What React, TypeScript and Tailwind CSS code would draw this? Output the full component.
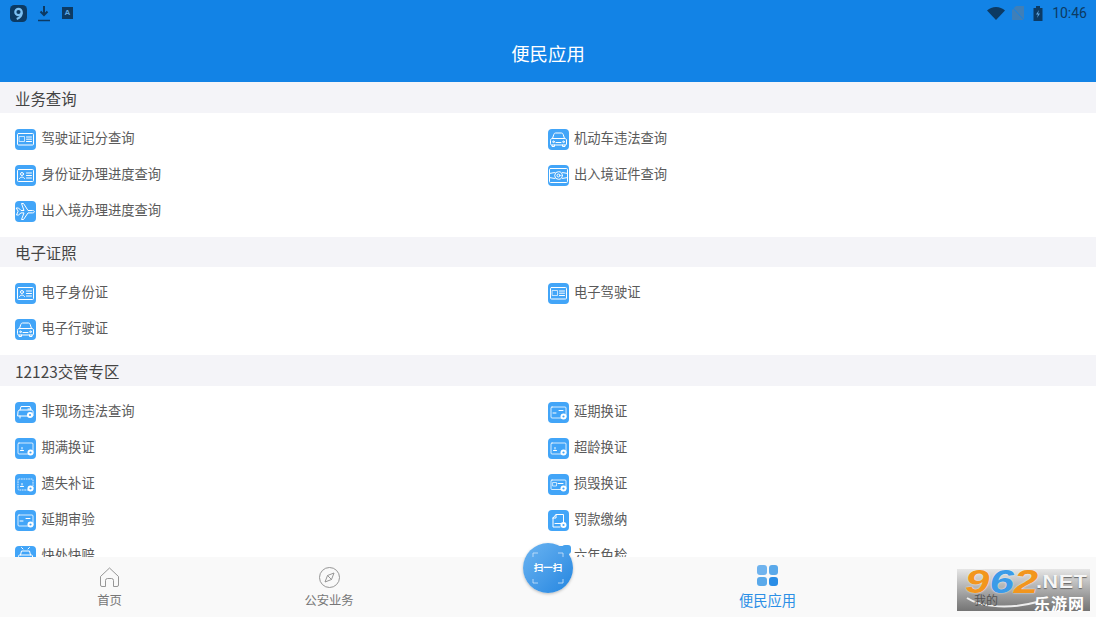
import React from "react";

const Tile = ({ children }: { children: React.ReactNode }) => (
  <svg width="21" height="21" viewBox="0 0 21 21" className="shrink-0 block" fill="none" stroke="#fff" strokeWidth="1" strokeLinecap="round" strokeLinejoin="round">
    <rect x="0" y="0" width="21" height="21" rx="4" fill="#42a5f8" stroke="none" />
    {children}
  </svg>
);

const Badge = ({ x = 15.5, y = 14.5 }: { x?: number; y?: number }) => (
  <>
    <circle cx={x} cy={y} r="3" fill="#fff" stroke="none" />
    <circle cx={x} cy={y} r="1.1" fill="#42a5f8" stroke="none" />
  </>
);

const Licence = () => (
  <Tile>
    <rect x="2.5" y="4.5" width="16" height="11.500" rx="1" />
    <rect x="4.5" y="7.5" width="5" height="5" strokeWidth="0.7" />
    <path d="M11.5 8h5M11.5 10.200h5M11.5 12.500h5" />
  </Tile>
);
const IdCard = () => (
  <Tile>
    <rect x="2.5" y="4.5" width="16" height="12" rx="1" />
    <circle cx="7" cy="9" r="1.5" />
    <path d="M4.500 13.500c.4-2 4.600-2 5 0M11.500 8h5M11.500 10.500h5M11.500 13h5" />
  </Tile>
);
const Plane = () => (
  <Tile>
    <path d="M1.500 7l2 0 2.500 2.500h3L6.500 2.500h2L13 9.500h4.500c1.500 0 2 1 2 1.200s-.5 1.200-2 1.200H13L8.500 18.500h-2l2.500-6.600H6L3.500 14h-2l1.500-3.500z" />
  </Tile>
);
const Car = () => (
  <Tile>
    <path d="M4.500 9.500l1.300-4c.3-.9.8-1.500 1.700-1.500h6c.9 0 1.400.6 1.700 1.500l1.300 4" />
    <path d="M2.500 11c0-1 .8-1.500 2-1.500h12c1.200 0 2 .5 2 1.500v4c0 .6-.4 1-1 1h-14c-.6 0-1-.4-1-1z" />
    <path d="M4 16v1.500h2.500V16M14.500 16v1.500H17V16M8 13.500h5" />
    <circle cx="5.500" cy="12.800" r=".8" />
    <circle cx="15.500" cy="12.800" r=".8" />
  </Tile>
);
const Passport = () => (
  <Tile>
    <rect x="1.500" y="3.500" width="18" height="14" rx="1" />
    <circle cx="10.500" cy="10.500" r="3.800" />
    <circle cx="10.500" cy="10.500" r="1.500" />
    <path d="M1.500 8.500c2 0 3-1 5-1M14.500 7.500c2 0 3 1 5 1M1.500 12.500c2 0 3 1 5 1M14.500 13.500c2 0 3-1 5-1" />
  </Tile>
);
const CarBadge = () => (
  <Tile>
    <path d="M5 8l1-3.500h9L16 8" />
    <path d="M3 9.500c0-1 .8-1.500 2-1.500h11c1.200 0 2 .5 2 1.500V14H3z" />
    <path d="M5 14v2M13 7h3" />
    <Badge x={15} y={13} />
  </Tile>
);
const CardBadge = ({ dash = false, small = false }: { dash?: boolean; small?: boolean }) => (
  <Tile>
    <rect x="3" y="5" width="15" height="11" rx="1" strokeDasharray={dash ? "1 1.400" : undefined} strokeWidth="0.8" />
    {small ? <path d="M5 11h3M11 8.500h4" /> : <path d="M7 9.500v1.500M5.500 12.500h3" />}
    <Badge />
  </Tile>
);
const LicenceBadge = () => (
  <Tile>
    <rect x="3" y="6" width="15" height="9.500" rx="1" strokeWidth="0.8" />
    <rect x="5" y="8.500" width="3.500" height="3.500" strokeWidth="0.7" />
    <path d="M10 9.500h5" />
    <Badge />
  </Tile>
);
const DocBadge = () => (
  <Tile>
    <path d="M5 8l3-3.500h7.500V12M5 8v9h7M5 8h3V4.500" />
    <path d="M7 13.500h6" />
    <Badge x={15.500} y={15} />
  </Tile>
);
const CameraCar = () => (
  <Tile>
    <path d="M8 3l-1.500-1.500M13 3l1.500-1.500" />
    <path d="M5.500 9l1-4h8l1 4" />
    <path d="M3.500 10c0-.8.6-1 1.500-1h11c.9 0 1.500.2 1.500 1v5h-14z" />
    <Badge x={15} y={15} />
  </Tile>
);

type Item = { label: string; icon: React.ReactNode };

const Section = ({ title, items, h }: { title: string; items: Item[]; h: string }) => (
  <section>
    <div className={`flex items-center bg-[#f4f4f8] pl-[15px] pt-[2px] text-[15.400px] text-[#444] ${h}`}>{title}</div>
    <div className="grid grid-cols-[548px_1fr] py-2">
      {items.map((it, i) => (
        <div key={it.label} className={i % 2 === 0 ? "flex h-9 items-center gap-[5.500px] pl-[15px]" : "flex h-9 items-center gap-[5px]"}>
          {it.icon}
          <span className="pb-[2px] text-[13.300px] leading-none text-[#5a5a5a]">{it.label}</span>
        </div>
      ))}
    </div>
  </section>
);

const NavItem = ({ icon, label, color, w }: { icon: React.ReactNode; label: string; color: string; w: string }) => (
  <div className={`flex flex-col items-center pt-[9px] ${w}`}>
    <div className="h-[23px] w-[23px]">{icon}</div>
    <span className={`mt-[2px] leading-[18px] ${color}`}>{label}</span>
  </div>
);

export default function App() {
  return (
    <div
      className="relative flex h-[617px] w-[1096px] flex-col overflow-hidden bg-white"
      style={{ fontFamily: '"Noto Sans CJK SC", "Noto Sans", sans-serif' }}
    >
      <header className="flex h-[82px] shrink-0 flex-col bg-[#1283e6]">
        <div className="flex h-[26px] items-center justify-between pl-[10px] pr-[9px]">
          <div className="flex items-center">
            <svg width="17" height="17" viewBox="0 0 17 17">
              <rect width="17" height="17" rx="4.500" fill="#0c3a63" />
              <circle cx="8.500" cy="7" r="3.200" fill="none" stroke="#7cc0f2" strokeWidth="2.200" />
              <path d="M11.700 7.500c0 3.500-2 5.500-5 6.500" fill="none" stroke="#7cc0f2" strokeWidth="2.200" />
            </svg>
            <svg width="14" height="17" viewBox="0 0 14 17" className="ml-[10px]">
              <path d="M7 1v8M3.500 6.500 7 10l3.500-3.500" stroke="#0c3a63" strokeWidth="2" fill="none" />
              <path d="M1 15.500h12" stroke="#0c3a63" strokeWidth="1.500" />
            </svg>
            <div className="ml-[11px] flex h-[12px] w-[11px] items-center justify-center bg-[#0c3a63] text-[8px] font-bold leading-none text-[#5ea6e0]" style={{ fontFamily: '"Liberation Sans", sans-serif' }}>A</div>
          </div>
          <div className="flex items-center">
            <svg width="18" height="13" viewBox="0 0 18 13"><path d="M0 3.500C2.500 1.200 5.500 0 9 0s6.500 1.200 9 3.500L9 13z" fill="#0c3a63" /></svg>
            <svg width="12" height="14" viewBox="0 0 12 14" className="ml-[7px]">
              <path d="M4 0h8v14H0V4z" fill="#3f7fb8" />
              <path d="M0 1l12 13" stroke="#1283e6" strokeWidth="1" />
            </svg>
            <svg width="10" height="15" viewBox="0 0 10 15" className="ml-[9px]">
              <path d="M3 0h4v2h2.500v13H.500V2H3z" fill="#0c3a63" />
              <path d="M6 4 3 8.500h2L4 12l3-4.500H5z" fill="#5ea6e0" />
            </svg>
            <span className="ml-[9px] text-[14px] leading-none text-[#0c3a63]" style={{ fontFamily: 'Roboto, sans-serif' }}>10:46</span>
          </div>
        </div>
        <div className="flex flex-1 items-center justify-center pb-[2px] text-[18.400px] leading-none text-white">便民应用</div>
      </header>

      <main className="min-h-0 flex-1 overflow-hidden">
        <Section
          title="业务查询"
          h="h-[31px]"
          items={[
            { label: "驾驶证记分查询", icon: <Licence /> },
            { label: "机动车违法查询", icon: <Car /> },
            { label: "身份证办理进度查询", icon: <IdCard /> },
            { label: "出入境证件查询", icon: <Passport /> },
            { label: "出入境办理进度查询", icon: <Plane /> },
          ]}
        />
        <Section
          title="电子证照"
          h="h-[30px]"
          items={[
            { label: "电子身份证", icon: <IdCard /> },
            { label: "电子驾驶证", icon: <Licence /> },
            { label: "电子行驶证", icon: <Car /> },
          ]}
        />
        <Section
          title="12123交管专区"
          h="h-[31px]"
          items={[
            { label: "非现场违法查询", icon: <CarBadge /> },
            { label: "延期换证", icon: <CardBadge small /> },
            { label: "期满换证", icon: <CardBadge /> },
            { label: "超龄换证", icon: <CardBadge /> },
            { label: "遗失补证", icon: <CardBadge dash /> },
            { label: "损毁换证", icon: <LicenceBadge /> },
            { label: "延期审验", icon: <CardBadge small /> },
            { label: "罚款缴纳", icon: <DocBadge /> },
            { label: "快处快赔", icon: <CameraCar /> },
            { label: "六年免检", icon: <CardBadge /> },
          ]}
        />
      </main>

      <nav className="flex h-[60px] shrink-0 bg-[#f9f9f9] text-[12.300px]">
        <NavItem
          w="w-[219px]"
          label="首页"
          color="text-[#777]"
          icon={
            <svg viewBox="0 0 23 23" width="23" height="23" fill="none" stroke="#8a8a8a" strokeWidth="0.9">
              <path d="M2.500 10.500 11.500 2l9 8.500V19a1.500 1.500 0 0 1-1.500 1.500h-3.500v-6a2 2 0 0 0-2-2h-4a2 2 0 0 0-2 2v6H4A1.500 1.500 0 0 1 2.500 19z" strokeLinejoin="round" />
            </svg>
          }
        />
        <NavItem
          w="w-[220px]"
          label="公安业务"
          color="text-[#777]"
          icon={
            <svg viewBox="0 0 23 23" width="23" height="23" fill="none" stroke="#8a8a8a" strokeWidth="0.9">
              <circle cx="11.500" cy="11.500" r="10" />
              <path d="M16 7l-6.500 2.500L7 16l6.500-2.500zM9.500 9.500l4 4" strokeLinejoin="round" />
            </svg>
          }
        />
        <div className="w-[219px]" />
        <NavItem
          w="w-[219px]"
          label="便民应用"
          color="text-[14.300px] text-[#2b8fe6]"
          icon={
            <div className="ml-[1px] mt-[-1px] grid h-[21px] w-[21px] grid-cols-2 gap-[2px]">
              <div className="rounded-[3px] bg-[#6fb3ee]" />
              <div className="rounded-[3px] bg-[#5aa9ea]" />
              <div className="rounded-[3px] bg-[#5aa9ea]" />
              <div className="rounded-[3px] bg-[#2a8de6]" />
            </div>
          }
        />
      </nav>

      <div className="absolute left-[523px] top-[543px] flex h-[50px] w-[50px] items-center justify-center rounded-full bg-gradient-to-br from-[#6ab4f1] to-[#2186e0] shadow-[0_1px_3px_rgba(0,0,0,0.25)]">
        <div className="absolute right-[2px] top-[2px] h-[9px] w-[9px] rounded-[3px] bg-[#45a0ec]" />
        <span className="relative text-[9.500px] font-bold leading-none text-white">扫一扫</span>
        <svg className="absolute inset-0" width="50" height="50" viewBox="0 0 50 50" fill="none" stroke="#cfe6fb" strokeWidth="0.8">
          <path d="M10 14v-4h5M35 10h5v4M10 36v4h5M35 40h5v-4" />
        </svg>
      </div>

      <div className="absolute left-[957px] top-[569px] h-[42px] w-[133px] bg-gradient-to-b from-[#e6e6e6] via-[#ababab] to-[#747474]">
        <svg className="absolute left-[8px] top-[26px]" width="75" height="15" viewBox="0 0 75 15" fill="none">
          <path d="M2 3c15 10 45 11 70 4" stroke="#eeeeee" strokeWidth="2" />
        </svg>
        <span className="absolute left-[17px] top-[25px] text-[12px] leading-[11px] text-[#555]">我的</span>
        <span className="absolute left-[8px] top-0 origin-left scale-x-[1.33] text-[33px] font-bold italic leading-[25px] [text-shadow:0_0_1.500px_#fff]" style={{ fontFamily: '"Liberation Sans", sans-serif' }}>
          <span className="text-[#f2961e]">9</span>
          <span className="text-[#3c9be8]">6</span>
          <span className="text-[#f2961e]">2</span>
        </span>
        <span className="absolute left-[79px] top-[4px] origin-left scale-x-[1.2] text-[18px] font-bold leading-[18px] tracking-[0.5px] text-[#f6f6f6] [text-shadow:0_1px_1px_#666]" style={{ fontFamily: '"Liberation Sans", sans-serif' }}>.NET</span>
        <span className="absolute left-[77px] top-[26px] text-[16px] font-bold leading-[16px] tracking-[1px] text-white">乐游网</span>
      </div>
    </div>
  );
}
